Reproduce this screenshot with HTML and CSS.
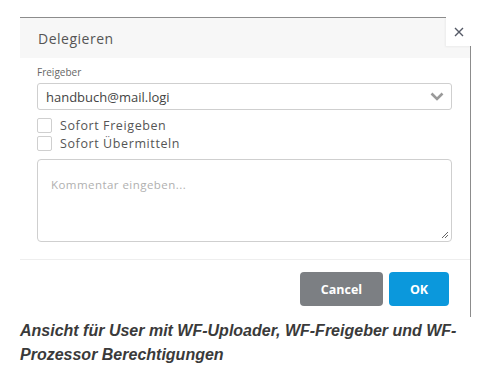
FILE: index.html
```html
<!DOCTYPE html>
<html lang="de">
<head>
<meta charset="utf-8">
<title>Delegieren</title>
<link rel="stylesheet" href="styles.css">
</head>
<body>
<div class="page">
  <div class="modal">
    <div class="modal-header">
      <span class="modal-title">Delegieren</span>
    </div>
    <button class="close" type="button" aria-label="Schließen">
      <svg width="10" height="10" viewBox="0 0 10 10"><path d="M1 1L9 9M9 1L1 9" stroke="#555a66" stroke-width="1.4" fill="none"/></svg>
    </button>
    <div class="modal-body">
      <label class="field-label">Freigeber</label>
      <div class="select">
        <span class="select-value">handbuch@mail.logi</span>
        <svg class="chevron" width="14" height="9" viewBox="0 0 14 9"><path d="M1.5 1.5L7 7L12.5 1.5" stroke="#9a9a9a" stroke-width="2.6" fill="none"/></svg>
      </div>
      <div class="checks">
        <label class="check"><span class="box"></span>Sofort Freigeben</label>
        <label class="check"><span class="box"></span>Sofort Übermitteln</label>
      </div>
      <div class="textarea">
        <span class="placeholder">Kommentar eingeben...</span>
        <svg class="grip" width="9" height="9" viewBox="0 0 9 9"><path d="M8 2L2 8M8 5L5 8" stroke="#666" stroke-width="1" fill="none"/></svg>
      </div>
    </div>
    <div class="modal-footer">
      <button class="btn btn-cancel" type="button">Cancel</button>
      <button class="btn btn-ok" type="button">OK</button>
    </div>
  </div>
  <p class="caption">Ansicht für User mit WF-Uploader, WF-Freigeber und WF-Prozessor Berechtigungen</p>
</div>
</body>
</html>
```
FILE: styles.css
```css
html, body {
  margin: 0;
  padding: 0;
  background: #ffffff;
}
.page {
  padding: 17px 0 0 20px;
  font-family: "Open Sans", "Noto Sans", sans-serif;
}
.modal {
  position: relative;
  width: 450px;
  border-top: 1px solid #8c8c8c;
  border-right: 1px solid #8c8c8c;
  background: #fff;
}
.modal-header {
  height: 40px;
  background: #f7f7f7;
  display: flex;
  align-items: center;
  padding-left: 18px;
}
.modal-title {
  font-size: 14px;
  color: #555;
  letter-spacing: 0.5px;
}
.close {
  position: absolute;
  top: -1px;
  right: -2px;
  width: 26px;
  height: 29px;
  border: none;
  padding: 0;
  background: #fff;
  display: flex;
  align-items: center;
  justify-content: center;
  box-shadow: -1px 1px 2px rgba(0,0,0,0.05);
}
.modal-body {
  padding: 8px 18px 17px 17px;
}
.field-label {
  display: block;
  font-size: 10px;
  color: #666;
  line-height: 12px;
  margin-bottom: 5px;
}
.select {
  height: 25px;
  border: 1px solid #cfcfcf;
  border-radius: 3px;
  display: flex;
  align-items: center;
  justify-content: space-between;
  padding: 0 7px 0 8px;
}
.select-value {
  font-size: 13px;
  color: #444;
  letter-spacing: 0;
}
.checks {
  display: flex;
  flex-direction: column;
  gap: 3px;
  margin-top: 8px;
}
.check {
  display: flex;
  align-items: center;
  gap: 8px;
  font-size: 12.5px;
  color: #555;
  letter-spacing: 0.6px;
  height: 15px;
}
.box {
  width: 13px;
  height: 13px;
  border: 1px solid #cfcfcf;
  border-radius: 2px;
  background: #fff;
}
.textarea {
  position: relative;
  margin-top: 8px;
  height: 83px;
  border: 1px solid #cfcfcf;
  border-radius: 4px;
  padding: 12px 13px;
  box-sizing: border-box;
}
.placeholder {
  font-size: 11.5px;
  color: #b0b0b0;
  letter-spacing: 0.45px;
}
.grip {
  position: absolute;
  right: 2px;
  bottom: 2px;
}
.modal-footer {
  border-top: 1px solid #eeeeee;
  display: flex;
  justify-content: flex-end;
  gap: 6px;
  padding: 12px 21px 11px 0;
}
.btn {
  height: 34px;
  border: none;
  border-radius: 4px;
  color: #fff;
  font-family: "Open Sans", sans-serif;
  font-weight: 700;
  font-size: 12.5px;
  padding: 0;
}
.btn-cancel {
  width: 83px;
  background: #7c7f83;
}
.btn-ok {
  width: 60px;
  background: #0b98dc;
}
.caption {
  margin: 2px 0 0 0;
  width: 450px;
  font-family: "Liberation Sans", Arial, sans-serif;
  font-weight: 700;
  font-style: italic;
  font-size: 16px;
  line-height: 24px;
  color: #3a3a3a;
}
```
